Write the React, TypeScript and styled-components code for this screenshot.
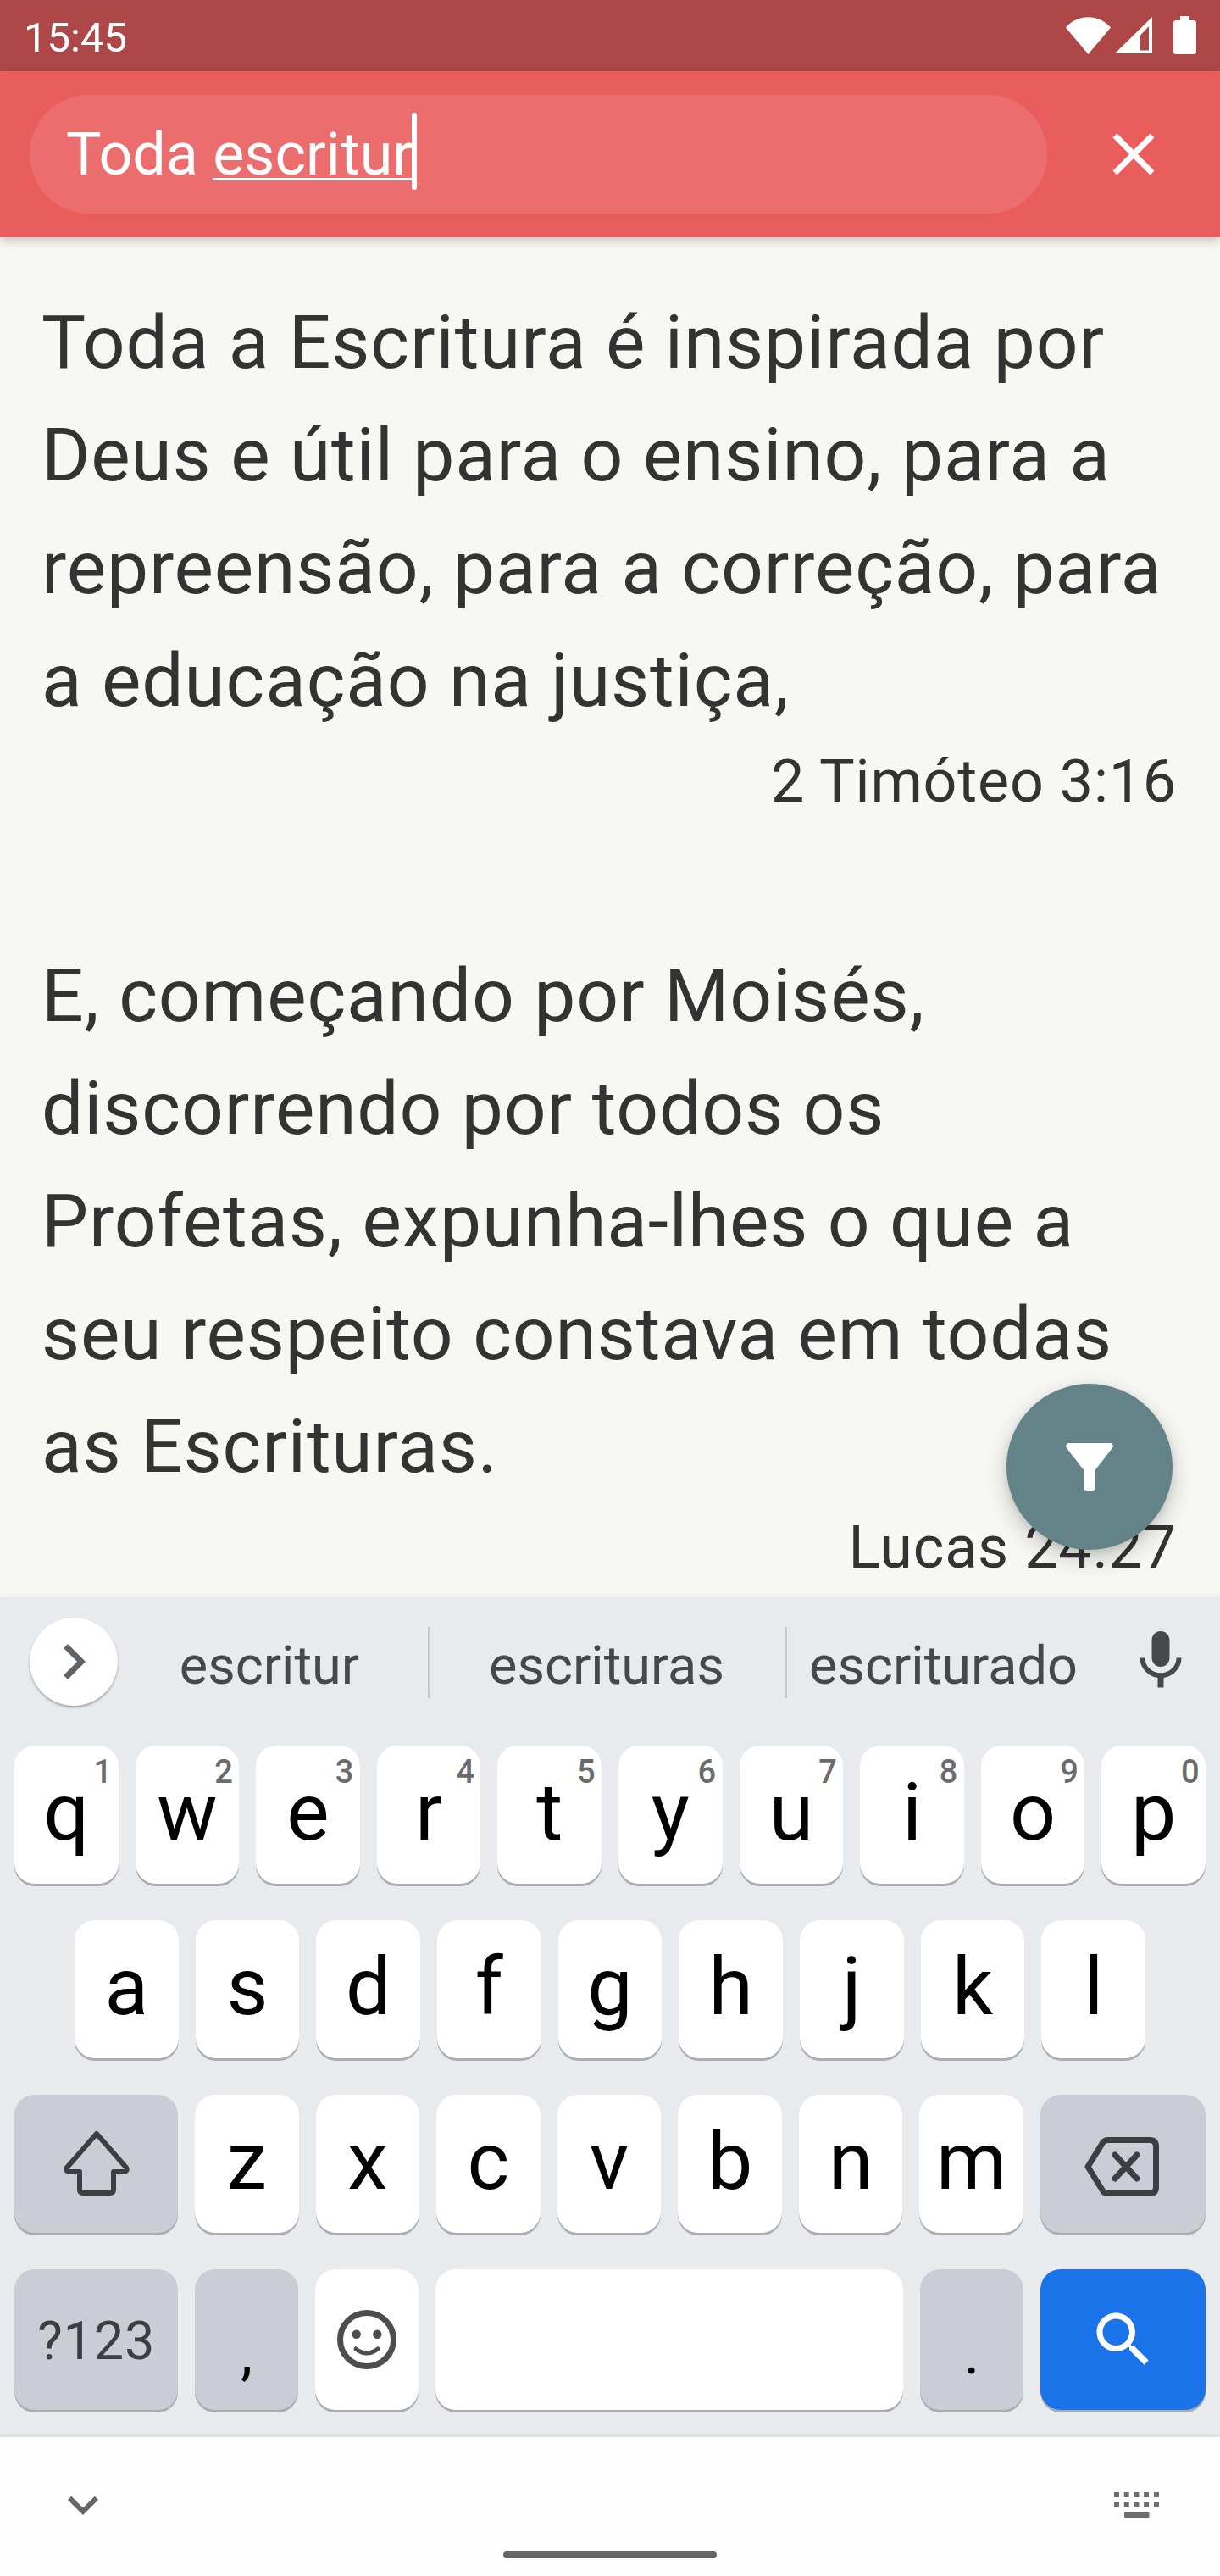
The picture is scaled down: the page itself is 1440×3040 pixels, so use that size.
import * as React from 'react';
import styled, { createGlobalStyle } from 'styled-components';

const GlobalStyle = createGlobalStyle`
  html, body {
    margin: 0;
    padding: 0;
    background: #f7f8f3;
  }
  * {
    box-sizing: border-box;
  }
`;

const Phone = styled.div`
  width: 1440px;
  height: 3040px;
  display: flex;
  flex-direction: column;
  overflow: hidden;
  font-family: Roboto, "Liberation Sans", sans-serif;
`;

// Status bar
const StatusBar = styled.div`
  height: 84px;
  flex: none;
  display: flex;
  align-items: center;
  justify-content: space-between;
  padding: 0 28px;
  background: #ae4747;
  color: #fff;
`;

const Clock = styled.span`
  font-size: 49px;
  line-height: 49px;
  padding-top: 4px;
`;

const StatusIcons = styled.div`
  display: flex;
  align-items: center;
  gap: 5px;
  margin-bottom: 1px;
`;

const BatteryIcon = styled.svg`
  margin-left: 20px;
`;

// Search app bar
const AppBar = styled.header`
  height: 196px;
  flex: none;
  display: flex;
  align-items: center;
  padding-left: 35px;
  background: #e95e5c;
  box-shadow: 0 4px 12px rgba(0, 0, 0, 0.22);
  position: relative;
  z-index: 2;
`;

const SearchPill = styled.div`
  width: 1201px;
  height: 140px;
  display: flex;
  align-items: center;
  padding-left: 43px;
  border-radius: 70px;
  background: #ec6d6d;
  color: #fff;
  font-size: 70px;
  line-height: 82px;
  white-space: pre;
`;

const Composing = styled.span`
  text-decoration: underline;
  text-decoration-thickness: 3px;
  text-underline-offset: 4px;
`;

const Caret = styled.span`
  width: 6px;
  height: 91px;
  margin: 0 0 7px -1px;
  border-radius: 3px;
  background: #fff;
`;

const CloseButton = styled.div`
  flex: 1;
  display: flex;
  justify-content: center;
`;

// Verses
const Content = styled.main`
  height: 1605px;
  flex: none;
  position: relative;
  overflow: hidden;
  padding: 58px 51px 0 49px;
  background: #f7f8f3;
  color: #333;
`;

const Verse = styled.p`
  margin: 0;
  font-size: 87.5px;
  line-height: 133px;
  letter-spacing: 0.85px;
`;

const Reference = styled.div`
  margin-bottom: 134px;
  text-align: right;
  font-size: 70px;
  line-height: 105px;
  letter-spacing: 0.8px;
`;

const FilterButton = styled.div`
  position: absolute;
  top: 1353px;
  left: 1188px;
  width: 196px;
  height: 196px;
  display: flex;
  align-items: center;
  justify-content: center;
  border-radius: 50%;
  background: #648388;
  box-shadow: 0 10px 28px rgba(0, 0, 0, 0.2), 0 3px 8px rgba(0, 0, 0, 0.1);
`;

// Keyboard
const Keyboard = styled.section`
  flex: none;
  position: relative;
  z-index: 1;
  padding-bottom: 28px;
  background: #e8eaed;
  border-bottom: 4px solid #e0e1e3;
  box-shadow: 0 -2px 6px rgba(0, 0, 0, 0.04);
`;

const SuggestionStrip = styled.div`
  height: 175px;
  display: flex;
  align-items: flex-start;
  padding: 24px 28px 0 35px;
`;

const ExpandButton = styled.div`
  width: 104px;
  height: 104px;
  flex: none;
  display: flex;
  align-items: center;
  justify-content: center;
  border-radius: 50%;
  background: #fff;
  box-shadow: 0 2px 3px rgba(0, 0, 0, 0.3);
`;

const Suggestion = styled.div<{ $width: number; $nudge?: number; $divider?: boolean }>`
  width: ${({ $width }) => $width}px;
  height: 84px;
  margin-top: 11px;
  flex: none;
  display: flex;
  align-items: center;
  justify-content: center;
  padding: 7px ${({ $nudge }) => $nudge || 0}px 0 0;
  border-right: ${({ $divider }) => ($divider ? '3px solid #c6c8cc' : '0')};
  color: #46484c;
  font-size: 63px;
`;

const MicIcon = styled.svg`
  margin-left: 30px;
  margin-top: 9px;
  flex: none;
`;

const KeyRows = styled.div`
  display: flex;
  flex-direction: column;
  gap: 43px;
`;

const KeyRow = styled.div<{ $inset?: number; $tall?: boolean }>`
  height: ${({ $tall }) => ($tall ? 166 : 163)}px;
  display: flex;
  gap: 20px;
  padding: 0 ${({ $inset }) => $inset || 17}px;
`;

type KeyTone = 'light' | 'dark' | 'action';

const toneColor: Record<KeyTone, string> = {
  light: '#fff',
  dark: '#cacdd5',
  action: '#1a73e8',
};

const Key = styled.div<{ $tone?: KeyTone; $width?: number; $centered?: boolean }>`
  position: relative;
  flex: ${({ $width }) => ($width ? `0 0 ${$width}px` : '1 1 0')};
  min-width: 0;
  display: flex;
  align-items: center;
  justify-content: center;
  padding-bottom: ${({ $centered }) => ($centered ? 0 : 6)}px;
  border-radius: 24px;
  background: ${({ $tone }) => toneColor[$tone || 'light']};
  box-shadow: 0 3px 0 #acadb0;
  color: #000;
  font-size: 95px;
  line-height: 95px;
`;

const SpaceKey = styled(Key)`
  flex: 0 0 552px;
`;

const Hint = styled.span`
  position: absolute;
  top: 9px;
  right: 8px;
  width: 21px;
  text-align: center;
  color: #6b6b6b;
  font-size: 38px;
  font-weight: 500;
  line-height: 44px;
`;

const SymbolsLabel = styled.span`
  color: #3d3e41;
  font-size: 63px;
  line-height: 63px;
  letter-spacing: 0.8px;
  padding-top: 8px;
`;

const PunctuationLabel = styled.span`
  font-size: 72px;
  line-height: 72px;
  padding-top: 38px;
`;

const ShiftIcon = styled.svg`
  margin-top: 4px;
`;

const BackspaceIcon = styled.svg`
  margin: 13px 3px 0 0;
`;

// Navigation bar under the keyboard
const NavBar = styled.nav`
  flex: 1;
  min-height: 0;
  position: relative;
  display: flex;
  align-items: flex-start;
  justify-content: space-between;
  padding: 65px 71px 0 62px;
  background: #fefefe;
`;

const ChevronWrap = styled.div`
  margin-top: -21px;
`;

const HomeHandle = styled.div`
  position: absolute;
  left: 594px;
  top: 135px;
  width: 252px;
  height: 8px;
  border-radius: 4px;
  background: #666;
`;

const rowOne = [
  ['q', '1'],
  ['w', '2'],
  ['e', '3'],
  ['r', '4'],
  ['t', '5'],
  ['y', '6'],
  ['u', '7'],
  ['i', '8'],
  ['o', '9'],
  ['p', '0'],
];
const rowTwo = ['a', 's', 'd', 'f', 'g', 'h', 'j', 'k', 'l'];
const rowThree = ['z', 'x', 'c', 'v', 'b', 'n', 'm'];

const Material: React.FC<{ d: string; size: number; color: string }> = ({ d, size, color }) => (
  <svg width={size} height={size} viewBox="0 0 24 24" style={{ display: 'block', flex: 'none' }}>
    <path d={d} fill={color} />
  </svg>
);

const WifiGlyph = () => (
  <svg width="53" height="44" viewBox="0 0 53 44">
    <path d="M0 12.5C14-4 39-4 53 12.5L26.5 44Z" fill="#fff" />
  </svg>
);

const SignalGlyph = () => (
  <svg width="44" height="43" viewBox="0 0 44 43">
    <path fillRule="evenodd" d="M0 43L44 0V43ZM30 21.5V39.5H40V11Z" fill="#fff" />
  </svg>
);

const BatteryGlyph = () => (
  <BatteryIcon width="27" height="45" viewBox="0 0 27 45">
    <path d="M8 0H19V5H24Q27 5 27 8V42Q27 45 24 45H3Q0 45 0 42V8Q0 5 3 5H8Z" fill="#fff" />
  </BatteryIcon>
);

const ShiftGlyph = () => (
  <ShiftIcon width="80" height="78" viewBox="0 0 80 78">
    <path
      d="M40 4L75 44Q77 48 73 49H60V70Q60 74 56 74H24Q20 74 20 70V49H7Q3 48 5 44Z"
      fill="none"
      stroke="#3d3e41"
      strokeWidth="6"
      strokeLinejoin="round"
    />
  </ShiftIcon>
);

const BackspaceGlyph = () => (
  <BackspaceIcon width="88" height="70" viewBox="0 0 88 70">
    <path
      d="M4 35L22 6Q24 3.500 28 3.500H77Q84.500 3.500 84.500 11V59Q84.500 66.500 77 66.500H28Q24 66.500 22 64Z"
      fill="none"
      stroke="#3d3e41"
      strokeWidth="7"
      strokeLinejoin="round"
    />
    <path d="M36 21L62 49M62 21L36 49" fill="none" stroke="#3d3e41" strokeWidth="7" strokeLinecap="round" />
  </BackspaceIcon>
);

const EmojiGlyph = () => (
  <svg width="70" height="70" viewBox="0 0 70 70">
    <circle cx="35" cy="35" r="31.500" fill="none" stroke="#4d4d4d" strokeWidth="7" />
    <circle cx="22.700" cy="28.700" r="5.200" fill="#4d4d4d" />
    <circle cx="47.300" cy="28.700" r="5.200" fill="#4d4d4d" />
    <path d="M22 46Q35 56 48 46" fill="none" stroke="#4d4d4d" strokeWidth="5" strokeLinecap="round" />
  </svg>
);

const KeyboardGlyph = () => (
  <svg width="54" height="30" viewBox="0 0 54 30">
    {[0, 11.7, 23.4, 35.1, 47].map((x) => (
      <React.Fragment key={x}>
        <rect x={x} y="0" width="6" height="6" fill="#6e6e6e" />
        <rect x={x} y="12" width="6" height="6" fill="#6e6e6e" />
      </React.Fragment>
    ))}
    <rect x="12" y="24" width="29.500" height="6" fill="#6e6e6e" />
  </svg>
);

export default function App() {
  return (
    <Phone>
      <GlobalStyle />
      <StatusBar>
        <Clock>15:45</Clock>
        <StatusIcons>
          <WifiGlyph />
          <SignalGlyph />
          <BatteryGlyph />
        </StatusIcons>
      </StatusBar>

      <AppBar>
        <SearchPill>
          Toda <Composing>escritur</Composing>
          <Caret />
        </SearchPill>
        <CloseButton>
          <Material
            size={84}
            color="#fff"
            d="M19 6.410L17.590 5 12 10.590 6.410 5 5 6.410 10.590 12 5 17.590 6.410 19 12 13.410 17.590 19 19 17.590 13.410 12z"
          />
        </CloseButton>
      </AppBar>

      <Content>
        <Verse>Toda a Escritura é inspirada por Deus e útil para o ensino, para a repreensão, para a correção, para a educação na justiça,</Verse>
        <Reference>2 Timóteo 3:16</Reference>
        <Verse>E, começando por Moisés, discorrendo por todos os Profetas, expunha-lhes o que a seu respeito constava em todas as Escrituras.</Verse>
        <Reference>Lucas 24.27</Reference>
        <FilterButton>
          <Material
            size={84}
            color="#fff"
            d="M4.250 5.610C6.270 8.200 10 13 10 13v6c0 .550.450 1 1 1h2c.550 0 1-.450 1-1v-6s3.720-4.800 5.740-7.390c.510-.660.040-1.610-.790-1.610H5.040c-.830 0-1.300.950-.790 1.610z"
          />
        </FilterButton>
      </Content>

      <Keyboard>
        <SuggestionStrip>
          <ExpandButton>
            <Material size={84} color="#5f6368" d="M10 6L8.590 7.410 13.170 12l-4.580 4.590L10 18l6-6z" />
          </ExpandButton>
          <Suggestion $width={369} $nudge={8} $divider>escritur</Suggestion>
          <Suggestion $width={421} $nudge={2} $divider>escrituras</Suggestion>
          <Suggestion $width={369}>escriturado</Suggestion>
          <MicIcon width="84" height="84" viewBox="0 0 24 24">
            <path
              fill="#46484c"
              d="M12 14c1.660 0 2.990-1.340 2.990-3L15 5c0-1.660-1.340-3-3-3S9 3.340 9 5v6c0 1.660 1.340 3 3 3zm5.300-3c0 3-2.540 5.100-5.300 5.100S6.700 14 6.700 11H5c0 3.410 2.720 6.230 6 6.720V21h2v-3.280c3.280-.480 6-3.300 6-6.720h-1.700z"
            />
          </MicIcon>
        </SuggestionStrip>

        <KeyRows>
          <KeyRow>
            {rowOne.map(([letter, digit]) => (
              <Key key={letter}>
                {letter}
                <Hint>{digit}</Hint>
              </Key>
            ))}
          </KeyRow>
          <KeyRow $inset={88}>
            {rowTwo.map((letter) => (
              <Key key={letter}>{letter}</Key>
            ))}
          </KeyRow>
          <KeyRow>
            <Key $tone="dark" $width={193}>
              <ShiftGlyph />
            </Key>
            {rowThree.map((letter) => (
              <Key key={letter}>{letter}</Key>
            ))}
            <Key $tone="dark" $width={195}>
              <BackspaceGlyph />
            </Key>
          </KeyRow>
          <KeyRow $tall>
            <Key $tone="dark" $width={193}>
              <SymbolsLabel>?123</SymbolsLabel>
            </Key>
            <Key $tone="dark" $width={122}>
              <PunctuationLabel>,</PunctuationLabel>
            </Key>
            <Key $width={122} $centered>
              <EmojiGlyph />
            </Key>
            <SpaceKey />
            <Key $tone="dark" $width={122}>
              <PunctuationLabel>.</PunctuationLabel>
            </Key>
            <Key $tone="action" $width={195} $centered>
              <Material
                size={84}
                color="#fff"
                d="M15.500 14h-.790l-.280-.270C15.410 12.590 16 11.110 16 9.500 16 5.910 13.090 3 9.500 3S3 5.910 3 9.500 5.910 16 9.500 16c1.610 0 3.090-.590 4.230-1.570l.270.280v.790l5 4.990L20.490 19l-4.990-5zm-6 0C7.010 14 5 11.990 5 9.500S7.010 5 9.500 5 14 7.010 14 9.500 11.990 14 9.500 14z"
              />
            </Key>
          </KeyRow>
        </KeyRows>
      </Keyboard>

      <NavBar>
        <ChevronWrap>
          <Material size={72} color="#666" d="M16.590 8.590L12 13.170 7.410 8.590 6 10l6 6 6-6z" />
        </ChevronWrap>
        <KeyboardGlyph />
        <HomeHandle />
      </NavBar>
    </Phone>
  );
}
